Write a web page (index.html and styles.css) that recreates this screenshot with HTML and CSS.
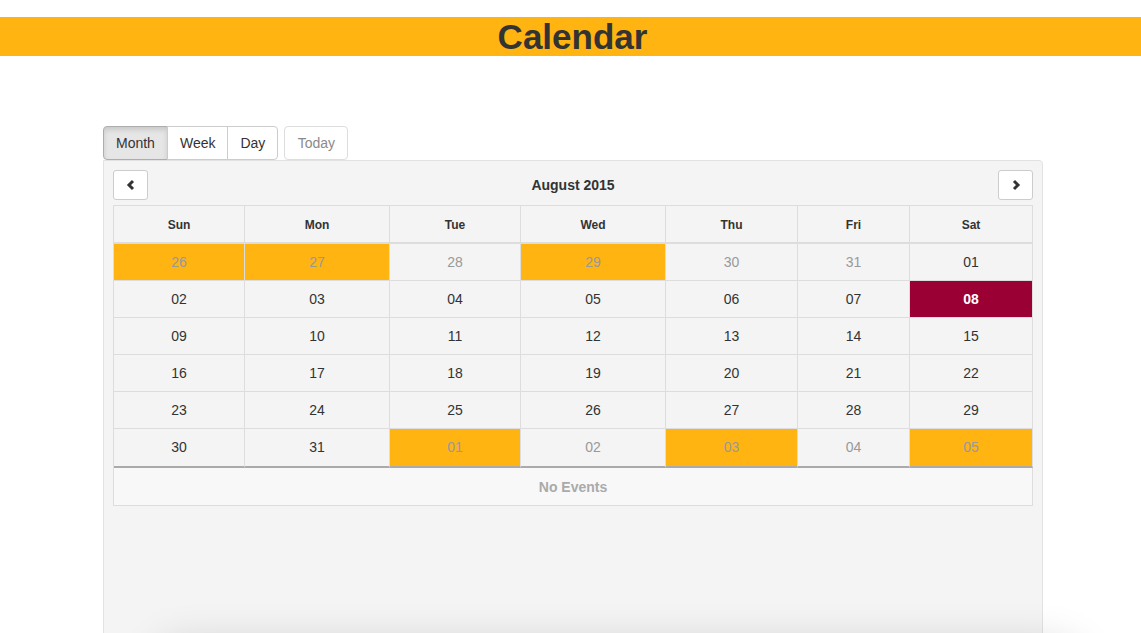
FILE: index.html
```html
<!DOCTYPE html>
<html>
<head>
<meta charset="utf-8">
<title>Calendar</title>
<link rel="stylesheet" href="styles.css">
</head>
<body>
<header class="topbar"><h1 class="title">Calendar</h1></header>
<main class="wrap">
  <div class="toolbar">
    <div class="btn-group">
      <button class="btn active">Month</button>
      <button class="btn">Week</button>
      <button class="btn">Day</button>
    </div>
    <button class="btn btn-today">Today</button>
  </div>
  <section class="panel">
    <div class="nav">
      <button class="nav-btn" aria-label="previous"><svg width="10" height="12" viewBox="0 0 10 12"><polyline points="7,2 3,6 7,10" fill="none" stroke="#333" stroke-width="3"/></svg></button>
      <div class="month">August 2015</div>
      <button class="nav-btn" aria-label="next"><svg width="10" height="12" viewBox="0 0 10 12"><polyline points="3,2 7,6 3,10" fill="none" stroke="#333" stroke-width="3"/></svg></button>
    </div>
    <div class="grid">
      <div class="th">Sun</div><div class="th">Mon</div><div class="th">Tue</div><div class="th">Wed</div><div class="th">Thu</div><div class="th">Fri</div><div class="th">Sat</div>

      <div class="td other hl">26</div><div class="td other hl">27</div><div class="td other">28</div><div class="td other hl">29</div><div class="td other">30</div><div class="td other">31</div><div class="td">01</div>
      <div class="td">02</div><div class="td">03</div><div class="td">04</div><div class="td">05</div><div class="td">06</div><div class="td">07</div><div class="td today">08</div>
      <div class="td">09</div><div class="td">10</div><div class="td">11</div><div class="td">12</div><div class="td">13</div><div class="td">14</div><div class="td">15</div>
      <div class="td">16</div><div class="td">17</div><div class="td">18</div><div class="td">19</div><div class="td">20</div><div class="td">21</div><div class="td">22</div>
      <div class="td">23</div><div class="td">24</div><div class="td">25</div><div class="td">26</div><div class="td">27</div><div class="td">28</div><div class="td">29</div>
      <div class="td last">30</div><div class="td last">31</div><div class="td last other hl">01</div><div class="td last other">02</div><div class="td last other hl">03</div><div class="td last other">04</div><div class="td last other hl">05</div>
    </div>
    <div class="events">No Events</div>
  </section>
  <div class="shade"></div>
</main>
</body>
</html>
```

FILE: styles.css
```css
html, body {
  margin: 0;
  padding: 0;
  background: #fff;
  font-family: "Liberation Sans", Arial, sans-serif;
  color: #333;
  overflow: hidden;
}

.topbar {
  margin-top: 17px;
  height: 39px;
  background: #ffb412;
  display: flex;
  align-items: center;
  justify-content: center;
}

.title {
  margin: 0 0 0 4px;
  font-size: 35px;
  font-weight: bold;
  line-height: 39px;
  color: #333;
}

.wrap {
  position: relative;
  margin: 70px 0 0 103px;
  width: 940px;
}

.toolbar {
  display: flex;
  gap: 6px;
  height: 34px;
}

.btn-group {
  display: flex;
}

.btn {
  font-family: "Liberation Sans", Arial, sans-serif;
  font-size: 14px;
  height: 34px;
  padding: 0 12px;
  background: #fff;
  color: #333;
  border: 1px solid #ccc;
  border-radius: 4px;
  margin: 0;
  cursor: pointer;
}

.btn-group .btn {
  border-radius: 0;
  margin-left: -1px;
}
.btn-group .btn:first-child {
  border-radius: 4px 0 0 4px;
  margin-left: 0;
}
.btn-group .btn:last-child {
  border-radius: 0 4px 4px 0;
}

.btn.active {
  background: #e6e6e6;
  border-color: #adadad;
  box-shadow: inset 0 3px 5px rgba(0,0,0,0.125);
}

.btn-today {
  color: #8a8a8a;
  border-color: #ddd;
  padding: 0 11px;
  width: 64px;
}

.panel {
  box-sizing: border-box;
  width: 940px;
  height: 520px;
  background: #f4f4f4;
  border: 1px solid #e2e2e2;
  border-radius: 0 4px 0 0;
  padding: 9px;
}

.nav {
  display: flex;
  align-items: flex-start;
  justify-content: space-between;
  height: 35px;
}

.nav-btn {
  box-sizing: border-box;
  width: 35px;
  height: 30px;
  background: #fff;
  border: 1px solid #ccc;
  border-radius: 3px;
  padding: 0;
  display: flex;
  align-items: center;
  justify-content: center;
}

.month {
  font-size: 14px;
  font-weight: bold;
  line-height: 30px;
}

.grid {
  display: grid;
  grid-template-columns: 131px 145px 131px 145px 132px 112px 123px;
  border-top: 1px solid #ddd;
  border-left: 1px solid #ddd;
  width: 920px;
  box-sizing: border-box;
}

.th {
  height: 38px;
  box-sizing: border-box;
  padding-top: 1px;
  border-right: 1px solid #ddd;
  border-bottom: 2px solid #ddd;
  font-size: 12px;
  font-weight: bold;
  display: flex;
  align-items: center;
  justify-content: center;
}

.td {
  height: 37px;
  box-sizing: border-box;
  border-right: 1px solid #ddd;
  border-bottom: 1px solid #ddd;
  font-size: 14px;
  display: flex;
  align-items: center;
  justify-content: center;
  color: #333;
}

.td.last {
  height: 39px;
  padding-bottom: 1px;
  border-bottom: 2px solid #aaa;
}

.td.other {
  color: #999;
}

.td.hl {
  background: #ffb412;
}

.td.today {
  background: #9b0034;
  color: #fff;
  font-weight: bold;
}

.events {
  box-sizing: border-box;
  width: 920px;
  height: 38px;
  background: #f8f8f8;
  border: 1px solid #ddd;
  border-top: 0;
  font-size: 14px;
  font-weight: bold;
  color: #aaa;
  display: flex;
  align-items: center;
  justify-content: center;
}

.shade {
  position: absolute;
  left: 50px;
  top: 515px;
  width: 930px;
  height: 60px;
  border-radius: 40px;
  box-shadow: 0 0 40px rgba(0,0,0,0.14);
}
```
